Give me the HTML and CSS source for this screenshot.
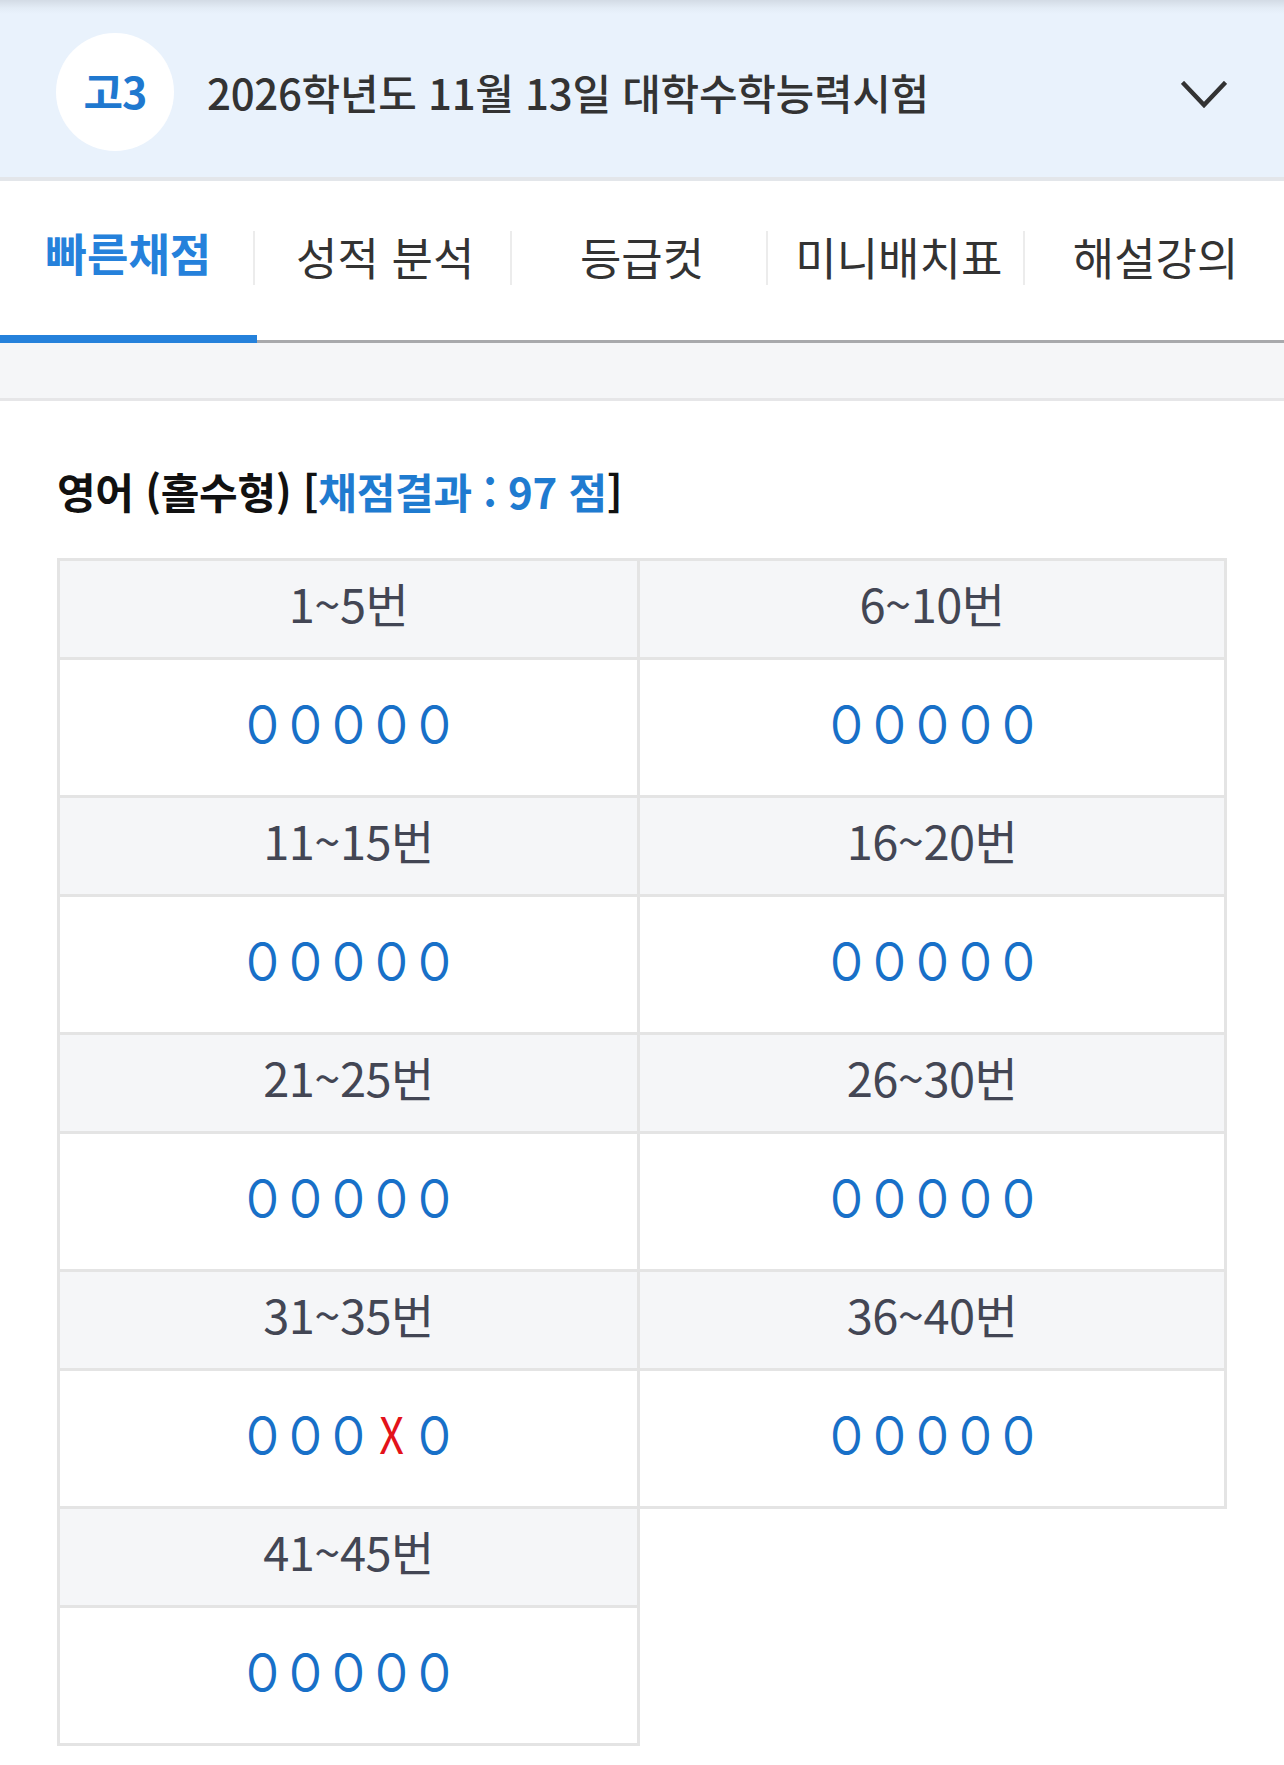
FILE: index.html
```html
<!DOCTYPE html>
<html lang="ko">
<head>
<meta charset="utf-8">
<title>빠른채점</title>
<link rel="stylesheet" href="styles.css">
</head>
<body>
<header class="exam-head">
  <div class="grade">고3</div>
  <div class="exam-title">2026학년도 11월 13일 대학수학능력시험</div>
  <svg class="chevron" viewBox="0 0 46 28" width="46" height="28" aria-hidden="true">
    <polyline points="3,3 23,24 43,3" fill="none" stroke="#333" stroke-width="4.5" stroke-linecap="square" stroke-linejoin="miter"/>
  </svg>
</header>

<nav class="tabs">
  <div class="tab active">빠른채점</div>
  <div class="tab">성적 분석</div>
  <div class="tab">등급컷</div>
  <div class="tab">미니배치표</div>
  <div class="tab">해설강의</div>
</nav>
<div class="band"></div>

<main class="content">
  <h2 class="subject">영어 (홀수형) [<span class="score">채점결과 : 97 점</span>]</h2>

  <div class="grid">
    <div class="cell head">1~5번</div>
    <div class="cell head">6~10번</div>
    <div class="cell ans"><span class="o">O</span><span class="o">O</span><span class="o">O</span><span class="o">O</span><span class="o">O</span></div>
    <div class="cell ans"><span class="o">O</span><span class="o">O</span><span class="o">O</span><span class="o">O</span><span class="o">O</span></div>

    <div class="cell head">11~15번</div>
    <div class="cell head">16~20번</div>
    <div class="cell ans"><span class="o">O</span><span class="o">O</span><span class="o">O</span><span class="o">O</span><span class="o">O</span></div>
    <div class="cell ans"><span class="o">O</span><span class="o">O</span><span class="o">O</span><span class="o">O</span><span class="o">O</span></div>

    <div class="cell head">21~25번</div>
    <div class="cell head">26~30번</div>
    <div class="cell ans"><span class="o">O</span><span class="o">O</span><span class="o">O</span><span class="o">O</span><span class="o">O</span></div>
    <div class="cell ans"><span class="o">O</span><span class="o">O</span><span class="o">O</span><span class="o">O</span><span class="o">O</span></div>

    <div class="cell head">31~35번</div>
    <div class="cell head">36~40번</div>
    <div class="cell ans"><span class="o">O</span><span class="o">O</span><span class="o">O</span><span class="o x">X</span><span class="o">O</span></div>
    <div class="cell ans"><span class="o">O</span><span class="o">O</span><span class="o">O</span><span class="o">O</span><span class="o">O</span></div>

    <div class="cell head">41~45번</div>
    <div class="empty"></div>
    <div class="cell ans"><span class="o">O</span><span class="o">O</span><span class="o">O</span><span class="o">O</span><span class="o">O</span></div>
    <div class="empty"></div>
  </div>
</main>
</body>
</html>
```

FILE: styles.css
```css
* { box-sizing: border-box; }

html, body {
  margin: 0;
  padding: 0;
  background: #ffffff;
  font-family: "Noto Sans CJK KR", "Noto Sans", sans-serif;
  color: #333333;
}

.exam-head {
  height: 181px;
  display: flex;
  align-items: center;
  padding: 6px 57px 0 56px;
  background: linear-gradient(#d3dbe5 0px, #e3ecf6 8px, #e9f2fc 14px, #e9f2fc 100%);
  border-bottom: 4px solid #e3e6ea;
}

.grade {
  width: 118px;
  height: 118px;
  border-radius: 50%;
  background: #ffffff;
  display: flex;
  align-items: center;
  justify-content: center;
  padding-bottom: 4px;
  color: #1f78cf;
  font-size: 43px;
  font-weight: 700;
  letter-spacing: -1px;
  flex: none;
}

.exam-title {
  margin-left: 33px;
  font-size: 42px;
  font-weight: 500;
  color: #333333;
  letter-spacing: -0.3px;
  flex: 1;
}

.chevron {
  flex: none;
  margin-top: 6px;
}

.tabs {
  display: flex;
  height: 162px;
  border-bottom: 3px solid #a8a9ac;
  background: #ffffff;
}

.tab {
  position: relative;
  flex: 1;
  display: flex;
  align-items: center;
  justify-content: center;
  padding-bottom: 8px;
  font-size: 45px;
  font-weight: 400;
  color: #333333;
  letter-spacing: 0;
}

.tab + .tab::before {
  content: "";
  position: absolute;
  left: -4px;
  top: 50px;
  height: 54px;
  width: 2px;
  background: #ececec;
}

.tab.active {
  color: #2581db;
  font-weight: 700;
  padding-bottom: 16px;
}

.tab.active::after {
  content: "";
  position: absolute;
  left: 0;
  right: 0;
  bottom: -3px;
  height: 8px;
  background: #2581db;
}

.band {
  height: 58px;
  background: #f5f6f8;
  border-bottom: 3px solid #e6e6e8;
}

.content {
  padding: 63px 57px 40px 57px;
}

.subject {
  margin: 0 0 40px 0;
  font-size: 42px;
  line-height: 54px;
  font-weight: 700;
  color: #111111;
  letter-spacing: -0.3px;
}

.score {
  color: #1f7bd0;
}

.grid {
  display: grid;
  grid-template-columns: 580px 1fr;
  grid-auto-rows: auto;
  border-top: 3px solid #e4e4e4;
  border-left: 3px solid #e4e4e4;
  width: 1170px;
}

.cell {
  border-right: 3px solid #e4e4e4;
  border-bottom: 3px solid #e4e4e4;
  display: flex;
  align-items: center;
  justify-content: center;
}

.cell.head {
  height: 99px;
  background: #f5f6f8;
  padding-bottom: 13px;
  font-size: 47px;
  color: #434654;
  letter-spacing: -0.5px;
}

.cell.ans {
  height: 138px;
  background: #ffffff;
}

.o {
  display: inline-block;
  width: 43px;
  text-align: center;
  font-family: "Noto Sans CJK KR", sans-serif;
  font-size: 50px;
  line-height: 50px;
  color: #1870c8;
  transform: translateY(-7px) scaleX(0.86);
}

.o.x {
  color: #e3121a;
}

.empty {
  background: transparent;
}
```
